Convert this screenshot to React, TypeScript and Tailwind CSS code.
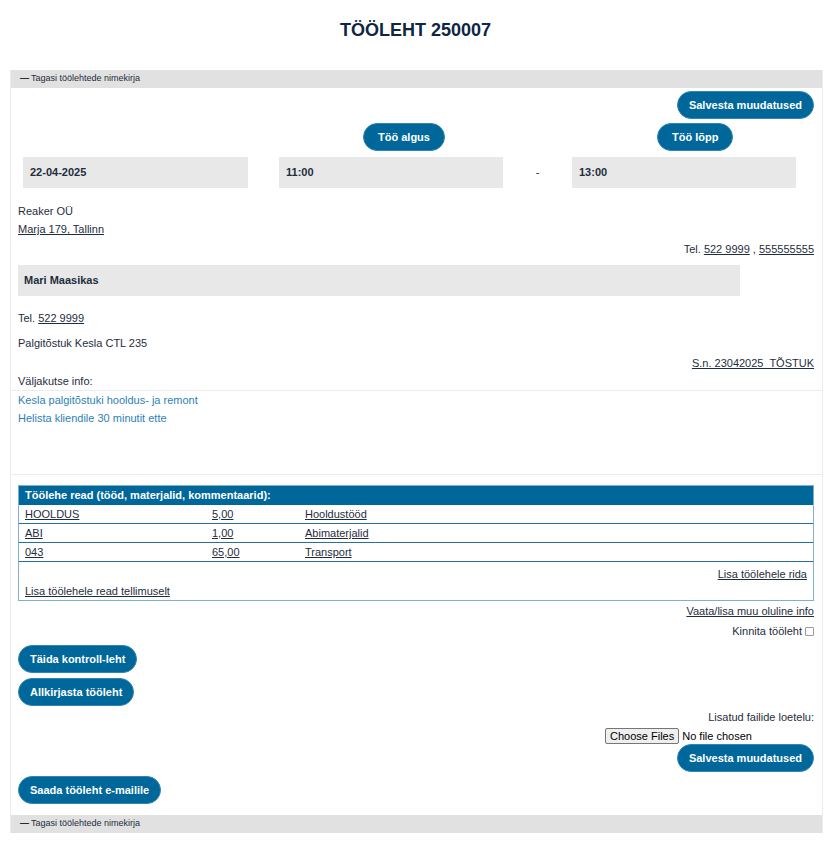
import React from "react";

const rows = [
  { code: "HOOLDUS", qty: "5,00", name: "Hooldustööd" },
  { code: "ABI", qty: "1,00", name: "Abimaterjalid" },
  { code: "043", qty: "65,00", name: "Transport" },
];

function PillButton({ children, wide }: { children: React.ReactNode; wide?: boolean }) {
  return (
    <button
      className={
        wide
          ? "h-[28px] rounded-full bg-[#00679b] px-[14px] text-[11px] font-bold text-white border border-[#2f86b3]"
          : "h-[28px] rounded-full bg-[#00679b] px-[11px] text-[11px] font-bold text-white border border-[#2f86b3]"
      }
    >
      {children}
    </button>
  );
}

function BackBar() {
  return (
    <div className="h-[18px] bg-[#e1e1e1] px-[9px] flex items-center text-[9px] text-[#1f2d3d]">
      <span className="font-bold mr-[2px]">—</span>
      Tagasi töölehtede nimekirja
    </div>
  );
}

export default function App() {
  return (
    <div
      className="bg-white text-[11px] text-[#1f2d3d] w-[831px] min-h-[843px]"
      style={{ fontFamily: '"Liberation Sans", Arial, sans-serif' }}
    >
      <div className="h-[70px] pt-[19px] text-center text-[18px] font-bold text-[#0e2645] leading-[22px]">
        TÖÖLEHT 250007
      </div>

      <div className="ml-[10px] mr-[8px] border-x border-[#ececec]">
        <BackBar />

        <div className="pl-[7px] pr-[8px] pt-[3px]">
          <div className="flex justify-end">
            <PillButton>Salvesta muudatused</PillButton>
          </div>

          {/* start / end times */}
          <div className="flex mt-[4px] pl-[5px]">
            <div className="w-[225px]" />
            <div className="w-[224px] ml-[31px] pl-[84px]">
              <PillButton wide>Töö algus</PillButton>
            </div>
            <div className="w-[69px]" />
            <div className="w-[224px] pl-[85px]">
              <PillButton wide>Töö lõpp</PillButton>
            </div>
          </div>
          <div className="flex items-center mt-[6px] pl-[5px] font-bold">
            <div className="w-[225px] h-[31px] bg-[#e8e8e8] flex items-center px-[7px]">22-04-2025</div>
            <div className="w-[224px] ml-[31px] h-[31px] bg-[#e8e8e8] flex items-center px-[7px]">11:00</div>
            <div className="w-[69px] text-center font-normal">-</div>
            <div className="w-[224px] h-[31px] bg-[#e8e8e8] flex items-center px-[7px]">13:00</div>
          </div>

          <div className="mt-[14px] leading-[18px]">
            <div>Reaker OÜ</div>
            <div>
              <a href="#" className="underline">Marja 179, Tallinn</a>
            </div>
            <div className="mt-[2px] text-right">
              Tel. <a href="#" className="underline">522 9999</a> , <a href="#" className="underline">555555555</a>
            </div>
          </div>

          <div className="mt-[7px] w-[722px] h-[31px] bg-[#e8e8e8] flex items-center px-[6px] font-bold">
            Mari Maasikas
          </div>

          <div className="mt-[13px] leading-[18px]">
            Tel. <a href="#" className="underline">522 9999</a>
          </div>
          <div className="mt-[7px] leading-[18px]">Palgitõstuk Kesla CTL 235</div>
          <div className="mt-[2px] leading-[18px] text-right">
            <a href="#" className="underline">S.n. 23042025&nbsp; TÕSTUK</a>
          </div>
          <div className="leading-[18px]">Väljakutse info:</div>
        </div>

        <div className="border-t border-[#ececec] h-[84px] px-[7px] text-[#2e7fb4] leading-[18px]">
          <div>Kesla palgitõstuki hooldus- ja remont</div>
          <div>Helista kliendile 30 minutit ette</div>
        </div>

        <div className="border-t border-[#ececec] pl-[7px] pr-[8px] pt-[10px] pb-[11px]">
          <div className="border border-[#7fb1cf]">
            <div className="h-[19px] bg-[#00679b] text-white font-bold flex items-center px-[6px]">
              Töölehe read (tööd, materjalid, kommentaarid):
            </div>
            {rows.map((r) => (
              <div key={r.code} className="h-[19px] flex items-center px-[6px] border-b border-[#2a6f9c]">
                <a href="#" className="underline w-[187px]">{r.code}</a>
                <a href="#" className="underline w-[93px]">{r.qty}</a>
                <a href="#" className="underline">{r.name}</a>
              </div>
            ))}
            <div className="h-[38px] px-[6px] pt-[3px] leading-[18px]">
              <div className="text-right">
                <a href="#" className="underline">Lisa töölehele rida</a>
              </div>
              <div className="-mt-[1px]">
                <a href="#" className="underline">Lisa töölehele read tellimuselt</a>
              </div>
            </div>
          </div>

          <div className="mt-[1px] text-right leading-[18px]">
            <a href="#" className="underline">Vaata/lisa muu oluline info</a>
          </div>
          <div className="mt-[2px] flex justify-end items-center leading-[18px]">
            Kinnita tööleht
            <span className="ml-[3px] inline-block w-[9px] h-[9px] border border-[#9a9a9a] rounded-[1px] bg-white" />
          </div>

          <div className="mt-[5px] flex flex-col items-start gap-[5px]">
            <PillButton>Täida kontroll-leht</PillButton>
            <PillButton>Allkirjasta tööleht</PillButton>
          </div>

          <div className="mt-[2px] text-right leading-[18px]">Lisatud failide loetelu:</div>
          <div className="mt-[2px] flex justify-end pr-[62px]">
            <input
              type="file"
              multiple
              className="w-[147px] text-[11px] leading-[14px] text-black file:border file:border-[#767676] file:bg-[#efefef] file:px-[4px] file:py-0 file:mr-[3px] file:rounded-[2px] file:text-black"
            />
          </div>
          <div className="flex justify-end">
            <PillButton>Salvesta muudatused</PillButton>
          </div>
          <div className="mt-[4px]">
            <PillButton>Saada tööleht e-mailile</PillButton>
          </div>
        </div>

        <BackBar />
      </div>
    </div>
  );
}
